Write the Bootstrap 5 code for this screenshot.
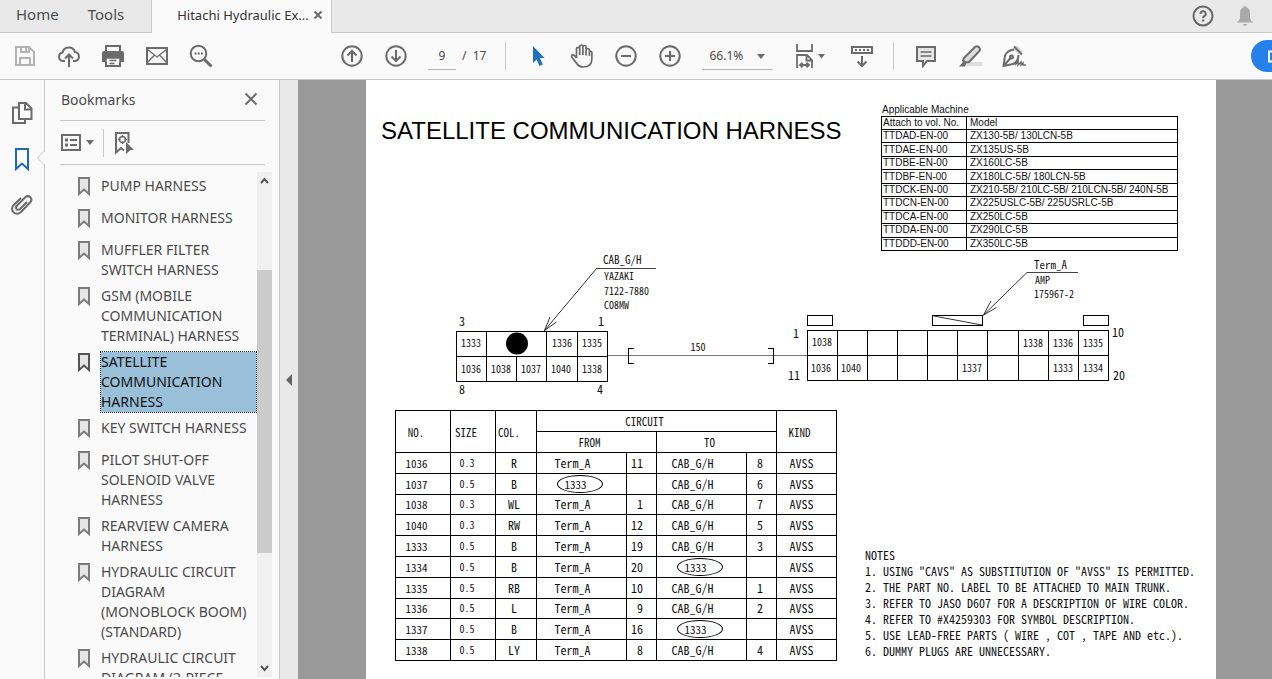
<!DOCTYPE html>
<html lang="en">
<head>
<meta charset="utf-8">
<meta name="viewport" content="width=device-width, initial-scale=1">
<title>Hitachi Hydraulic Excavator</title>
<link rel="stylesheet" href="https://cdn.jsdelivr.net/npm/bootstrap@5.3.0/dist/css/bootstrap.min.css">
<style>
  body { font-family: "Noto Sans", "Open Sans", sans-serif; font-size: 14px; color: #4b4b4b; background: #fafafa; }
  svg { display: block; }
  svg:not([fill]) { fill: none; }
  .tabs-bar { height: 33px; background: #e9e9e9; border-bottom: 1px solid #c8c8c8; }
  .tabs-bar .app-tab { height: 32px; line-height: 29px; font-size: 15px; color: #4b4b4b; text-decoration: none; }
  .tabs-bar .app-tab + .app-tab { margin-left: 29px; }
  .doc-tab { height: 33px; width: 181px; margin-left: 27px; padding-left: 25px; line-height: 30px; font-size: 13px; background: #fafafa; border: solid #c8c8c8; border-width: 0 1px; color: #333; }
  .bell { margin: 0 17px 0 20px; }
  .tool-bar { height: 47px; background: #fafafa; border-bottom: 1px solid #c8c8c8; }
  .file-tools { margin: 0 107px 0 3px; }
  .tool-btn { width: 44px; height: 46px; padding: 0; border: 0; background: none; color: #6b6b6b; flex: none; display: flex; align-items: center; justify-content: center; }
  .tool-btn svg, .ico { stroke: currentColor; stroke-width: 2; }
  .tool-btn .solid { stroke: none; }
  .tool-btn.faded { color: #b3b3b3; }
  .tool-btn.current { color: #2068b5; }
  .vline { width: 1px; height: 28px; background: #c8c8c8; flex: none; }
  .page-box { width: 28px; height: 28px; margin-left: 10px; border: 0; border-bottom: 1px solid #b5b5b5; background: none; text-align: center; font-size: 12px; color: #4b4b4b; padding: 0; }
  .page-total { font-size: 12px; margin: 0 19px 0 6px; }
  .zoom-wrap { margin: 0 15px 0 10px; }
  .zoom-box { width: 71px; height: 28px; border: 0; border-bottom: 1px solid #b5b5b5; appearance: none; font-size: 12px; color: #4b4b4b; padding: 0 7px; background: none; }
  .caret-down { width: 0; height: 0; border: 4px solid transparent; border-top: 5px solid #6b6b6b; border-bottom: 0; }
  .zoom-wrap .caret-down { position: absolute; right: 8px; top: 12px; pointer-events: none; }
  .share-pill { width: 21px; height: 32px; background: #2680eb; border: 0; border-radius: 16px 0 0 16px; padding: 0; overflow: hidden; }
  .work { min-height: 0; }
  .rail { width: 45px; border-right: 1px solid #c8c8c8; padding-top: 10px; flex: none; }
  .rail-notch { right: -1px; top: 69px; }
  .side-panel { width: 235px; border-right: 1px solid #c8c8c8; flex: none; }
  .panel-head { height: 41px; margin: 0 14px 0 15px; padding: 0 7px 2px 1px; border-bottom: 1px solid #c8c8c8; }
  .panel-tools { height: 44px; margin: 0 14px 0 15px; border-bottom: 1px solid #c8c8c8; color: #6b6b6b; }
  .plain { border: 0; background: none; padding: 0; color: #6b6b6b; }
  .marks { margin: 7px 7px 2px 0; min-height: 0; }
  .mark-list { overflow: hidden; padding: 4px 1px 0 32px; }
  .mark-list li { min-height: 26px; margin-bottom: 6px; display: flex; align-items: flex-start; }
  .mark-list svg { margin-right: 10px; flex: none; stroke: #7c7c7c; stroke-width: 2; }
  .mark-list a { color: #4b4b4b; text-decoration: none; line-height: 20px; white-space: nowrap; flex: 1; }
  .mark-list .chosen a { background: #99bfd9; color: #111; outline: 1px dotted #222; }
  .mark-list .chosen svg { stroke: #555; }
  .track { width: 15px; background: #f0f0f0; flex: none; }
  .track-thumb { background: #cbcbcb; flex: 283; }
  .track-above { flex: 78; }
  .track-below { flex: 106; }
  .fold { width: 18px; background: #e9e9e9; flex: none; padding: 0; border: 0; }
  .doc-area { background: #999; padding: 0 56px 0 68px; overflow: hidden; min-width: 0; }
  .sheet { background: #fff; color: #000; min-height: 100%; }
  .sheet-title { font: 24px/30px "Liberation Sans", sans-serif; margin: 36px 0 0 15px; white-space: nowrap; }
  .machines { font: 10px/12px "Liberation Sans", sans-serif; margin: 23px 38px 0 0; }
  .machines caption { caption-side: top; color: #111; padding: 0 0 0 1px; line-height: 13px; }
  .machines table { width: 297px; height: 135px; border-collapse: collapse; color: #111; }
  .machines td, .machines th { border: 1px solid #000; padding: 0 0 0 3px; font-weight: 400; line-height: 12px; white-space: nowrap; }
  .machines td:first-child, .machines th:first-child { padding-left: 1px; width: 85px; }
  .cad { font-family: "Noto Sans CJK JP", "Liberation Mono", monospace; font-feature-settings: "hwid"; }
  .diagram { width: 100%; font-size: 10px; }
  .diagram text { fill: #111; }
  .diagram .part { font-size: 11px; }
  .diagram .pin { text-anchor: middle; }
  .diagram .num { font-size: 12px; text-anchor: middle; }
  .wires { margin-left: 29px; width: 441px; height: 251px; table-layout: fixed; border-collapse: collapse; font-size: 12px; color: #111; flex: none; }
  .wires tr { height: 20px; }
  .wires thead tr { height: 21px; }
  .wires th, .wires td { border: 1px solid #000; padding: 0; text-align: center; font-weight: 400; line-height: 18px; }
  .wires th { font-size: 11px; padding-right: 14px; }
  .wires th.wide-head { padding-right: 24px; }
  .wires td:first-child { padding-right: 13px; font-size: 11px; }
  .wires td:nth-child(2) { padding-right: 12px; font-size: 10px; }
  .wires td:nth-child(3) { padding-right: 4px; }
  .wires td:nth-child(4), .wires td:nth-child(6) { padding-right: 18px; }
  .wires td:nth-child(5), .wires td:nth-child(7) { text-align: right; padding-right: 13px; }
  .wires td:last-child { padding-right: 10px; }
  .ring { display: inline-block; width: 46px; height: 18px; line-height: 16px; border: 1px solid #000; border-radius: 50%; vertical-align: top; padding-right: 8px; margin-left: 14px; font-size: 11px; }
  .notes { font-size: 12px; line-height: 16px; margin: 137px 0 0 28px; white-space: pre; color: #111; }
</style>
</head>
<body class="vh-100 overflow-hidden d-flex flex-column">
<header class="tabs-bar d-flex flex-shrink-0">
  <a href="#" class="app-tab ms-3">Home</a>
  <a href="#" class="app-tab">Tools</a>
  <div class="doc-tab d-flex align-items-start"><span class="text-nowrap">Hitachi Hydraulic Ex...</span>
    <button class="plain ms-1 mt-2" aria-label="Close tab"><svg class="ico" width="10" height="14" viewBox="0 0 10 14"><path d="M1.500 3.500l7 7M8.500 3.500l-7 7"/></svg></button></div>
  <button class="plain ms-auto" aria-label="Help"><svg width="24" height="28" viewBox="0 0 24 28"><circle cx="12" cy="14" r="9.500" stroke="#666" stroke-width="2"/><path d="M9.500 12a2.600 2.600 0 1 1 3.800 2.200q-1.200.6-1.200 2" stroke="#666" stroke-width="2"/><circle cx="12.100" cy="18.600" r="1.200" fill="#666"/></svg></button>
  <button class="plain bell" aria-label="Notifications"><svg width="20" height="28" viewBox="0 0 20 28" fill="#a9a9a9"><path d="M10 4q1.500 0 1.700 1.500Q15 6.500 15 11v4q0 3 3.500 5.500h-17Q5 18 5 15v-4q0-4.500 3.300-5.500Q8.500 4 10 4zM8 22h4q-.4 2-2 2t-2-2z"/></svg></button>
</header>

<nav class="tool-bar d-flex align-items-center flex-shrink-0 overflow-hidden" aria-label="Toolbar">
  <div class="file-tools d-flex">
    <button class="tool-btn faded" aria-label="Save"><svg width="24" height="24" viewBox="0 0 24 24"><path d="M3 3h13l5 5v13H3zM8 3v5h8V3M13 4v3M7 21v-7h10v7" /></svg></button>
    <button class="tool-btn" aria-label="Upload"><svg width="24" height="24" viewBox="0 0 24 24"><path d="M8 17H6a4.300 4.300 0 0 1-.5-8.500A6.500 6.500 0 0 1 18 8a4.600 4.600 0 0 1 .5 9H16M12 23V11M8 14.500l4-4 4 4"/></svg></button>
    <button class="tool-btn" aria-label="Print"><svg width="24" height="24" viewBox="0 0 24 24"><path d="M5 7V2h14v5M5 18v4h14v-4"/><path d="M3 7h18q2 0 2 2v9h-4v-4H5v4H1V9q0-2 2-2z" fill="currentColor" stroke="none"/><path d="M5 22v-8h14v8M8.500 16.500h7M8.500 19.500h5" stroke-width="1.500"/></svg></button>
    <button class="tool-btn" aria-label="Email"><svg width="24" height="24" viewBox="0 0 24 24"><path d="M2 4h20v16H2z"/><path d="M2 5l10 8 10-8M2 19l7.500-8M22 19l-7.500-8" stroke-width="1.300"/></svg></button>
    <button class="tool-btn" aria-label="Search"><svg width="24" height="24" viewBox="0 0 24 24"><circle cx="9.500" cy="9.500" r="7.800"/><path d="M15.500 15.500l7 7" stroke-width="3"/><path d="M5.500 9.500h2M8.700 9.500h2M11.900 9.500h2"/></svg></button>
  </div>
  <button class="tool-btn" aria-label="Previous page"><svg width="24" height="24" viewBox="0 0 24 24"><circle cx="12" cy="12" r="9.700"/><path d="M12 18V7M7.500 11.500L12 7l4.500 4.500"/></svg></button>
  <button class="tool-btn" aria-label="Next page"><svg width="24" height="24" viewBox="0 0 24 24"><circle cx="12" cy="12" r="9.700"/><path d="M12 6v11M7.500 12.500L12 17l4.500-4.500"/></svg></button>
  <input class="page-box" value="9" aria-label="Page number">
  <span class="page-total text-nowrap">/ &nbsp;17</span>
  <span class="vline" style="margin-right:10px"></span>
  <button class="tool-btn" aria-label="Select"><svg class="solid" width="24" height="24" viewBox="0 0 24 24" fill="#1f6fc0"><path d="M7 2l11.500 12h-4.700l3 6.500-3.300 1.500-2.900-6.500L7 19z"/></svg></button>
  <button class="tool-btn" aria-label="Hand"><svg width="26" height="26" viewBox="0 0 26 26"><g stroke-width="1.700"><path d="M7.500 15V6q0-1.700 1.600-1.700T10.700 6v6M10.700 12V3.500Q10.700 2 12.300 2t1.600 1.500V12M13.900 12V4q0-1.500 1.600-1.500T17.100 4v8.500M17.100 7q.2-1.500 1.700-1.500T20.400 7v6M20.400 8.500q2.500-.6 2.500 1.500v5.500q0 8.500-8.400 8.500-5 0-7.500-4.500L3 14.500q-1-1.700.3-2.400 1.200-.6 2.200.5L7.500 15"/></g></svg></button>
  <button class="tool-btn" aria-label="Zoom out"><svg width="24" height="24" viewBox="0 0 24 24"><circle cx="12" cy="12" r="9.700"/><path d="M7 12h10"/></svg></button>
  <button class="tool-btn" aria-label="Zoom in"><svg width="24" height="24" viewBox="0 0 24 24"><circle cx="12" cy="12" r="9.700"/><path d="M7 12h10M12 7v10"/></svg></button>
  <div class="zoom-wrap position-relative"><select class="zoom-box d-block" aria-label="Zoom level"><option>66.1%</option></select><span class="caret-down"></span></div>
  <button class="tool-btn" aria-label="Fit width"><svg width="32" height="26" viewBox="0 0 32 26"><path d="M3 1v7h15V1M3 25V12h10l5 5v8M12.500 12v5.500H18M6.500 22h8M8.500 19.800L6 22l2.500 2.200M12.500 19.800L15 22l-2.500 2.200" stroke-width="1.800"/><path d="M24 11h7l-3.500 4.500z" fill="currentColor" stroke="none"/></svg></button>
  <button class="tool-btn ms-2" aria-label="Page display"><svg width="24" height="24" viewBox="0 0 24 24"><path d="M2 3h20v6H2zM12 12v9M7.500 17.500L12 22l4.500-4.500"/><path d="M5 6h14" stroke-dasharray="2 2"/></svg></button>
  <span class="vline" style="margin:0 10px 0 9px"></span>
  <button class="tool-btn" aria-label="Comment"><svg width="24" height="24" viewBox="0 0 24 24"><path d="M3 3h18v14h-8l-4 5v-5H3z" fill="#e6e6e6"/><path d="M6.500 8h11M6.500 12h11" stroke-width="1.500"/></svg></button>
  <button class="tool-btn" aria-label="Highlight"><svg width="24" height="24" viewBox="0 0 24 24"><path d="M11 18h13v4H8z" fill="#dcdcdc" stroke="none"/><path d="M6 14L17 3q2-1.500 4 .2 1.800 2 .3 4L11 18l-3 .5-3-2z" fill="#dcdcdc"/><path d="M1 22.500l4.500-5 3 2-1.500 3z" fill="currentColor" stroke="none"/></svg></button>
  <button class="tool-btn" aria-label="Sign"><svg width="26" height="24" viewBox="0 0 26 24"><path d="M12 5l4-4 6 6-4 4z" fill="#dcdcdc" stroke="none"/><path d="M13 2.500l8 8M13 5.500q-7 1-9 6L2.500 22l9.500-2q5-2 5.500-9M3 21.500l7-8"/><circle cx="10.500" cy="13" r="1.500"/><path d="M14 21l3-4v4l3-3v3l2-2v2h3" stroke-width="1.500"/></svg></button>
  <button class="share-pill ms-auto" aria-label="Share"><svg width="21" height="32" viewBox="0 0 21 32" stroke="#fff" stroke-width="2"><path d="M24 11.500h-6v10h6"/></svg></button>
</nav>

<main class="work d-flex flex-grow-1">
  <div class="rail position-relative">
    <button class="tool-btn" aria-label="Pages"><svg width="24" height="24" viewBox="0 0 24 24"><path d="M9 2h7l5.500 5.500V18H9zM15 2v6.500h6.500M9 6.500H3V22h12v-4"/></svg></button>
    <button class="tool-btn current" aria-label="Bookmarks"><svg width="24" height="24" viewBox="0 0 24 24"><path d="M6 2h12v20l-6-5.500L6 22z"/></svg></button>
    <button class="tool-btn" aria-label="Attachments"><svg width="24" height="24" viewBox="0 0 24 24"><path d="M17 9l-7 7q-2 1.500-3.500.2-1.300-1.700.3-3.400l8.500-8.500q2.700-2.300 5 0t0 5L11 19q-4 3.500-7.500.3-3-3.700.2-7.300L11 5"/></svg></button>
    <svg class="rail-notch position-absolute" width="9" height="18" viewBox="0 0 9 18"><path d="M8.500 0v2l-7 7 7 7v2" fill="#fafafa" stroke="#c8c8c8"/><path d="M8.500 3v12" stroke="#fafafa"/></svg>
  </div>
  <aside class="side-panel d-flex flex-column">
    <div class="panel-head d-flex align-items-center flex-shrink-0"><span>Bookmarks</span>
      <button class="plain ms-auto" aria-label="Close panel"><svg class="ico" width="14" height="14" viewBox="0 0 14 14"><path d="M1.500 1.500l11 11M12.500 1.500l-11 11"/></svg></button></div>
    <div class="panel-tools d-flex align-items-center flex-shrink-0">
      <button class="plain d-flex align-items-center" aria-label="Options"><svg class="ico" width="22" height="20" viewBox="0 0 22 20"><path d="M2 2h18v15H2z"/><path d="M5 7h3M5 12h3" stroke-width="3"/><path d="M10 7h7M10 12h7"/></svg><span class="caret-down ms-1"></span></button>
      <span class="vline" style="margin:0 10px 0 9px"></span>
      <button class="plain" aria-label="Find current bookmark"><svg class="ico" width="22" height="24" viewBox="0 0 22 24"><path d="M14.500 12V2H2v19.500l5-4.500 3 2.500"/><circle cx="8.500" cy="8.500" r="3" stroke-width="1.300"/><path d="M8.500 4v2.500M8.500 10.500V13M4 8.500h2.500M10.500 8.500H13" stroke-width="1.300"/><path d="M12 11l8 8h-3.500L12 23z" fill="currentColor" stroke="none"/></svg></button>
    </div>
    <div class="marks d-flex flex-grow-1">
      <ul class="mark-list list-unstyled mb-0 flex-grow-1" id="markList"></ul>
      <div class="track d-flex flex-column" aria-hidden="true">
        <svg width="15" height="20" viewBox="0 0 15 20" stroke="#555" stroke-width="2"><path d="M4 11l3.500-4 3.500 4"/></svg>
        <div class="track-above"></div><div class="track-thumb"></div><div class="track-below"></div>
        <svg width="15" height="18" viewBox="0 0 15 18" stroke="#555" stroke-width="2"><path d="M4 7l3.500 4L11 7"/></svg>
      </div>
    </div>
  </aside>
  <button class="fold" aria-label="Collapse panel"><svg width="17" height="12" viewBox="0 0 17 12"><path d="M12 0v12L6 6z" fill="#666"/></svg></button>

  <section class="doc-area flex-grow-1">
    <div class="sheet d-flex flex-column">
      <div class="d-flex justify-content-between">
        <h1 class="sheet-title">SATELLITE COMMUNICATION HARNESS</h1>
        <div class="machines">
          <table><caption>Applicable Machine</caption><thead><tr><th>Attach to vol. No.</th><th>Model</th></tr></thead><tbody>
            <tr><td>TTDAD-EN-00</td><td>ZX130-5B/ 130LCN-5B</td></tr>
            <tr><td>TTDAE-EN-00</td><td>ZX135US-5B</td></tr>
            <tr><td>TTDBE-EN-00</td><td>ZX160LC-5B</td></tr>
            <tr><td>TTDBF-EN-00</td><td>ZX180LC-5B/ 180LCN-5B</td></tr>
            <tr><td>TTDCK-EN-00</td><td>ZX210-5B/ 210LC-5B/ 210LCN-5B/ 240N-5B</td></tr>
            <tr><td>TTDCN-EN-00</td><td>ZX225USLC-5B/ 225USRLC-5B</td></tr>
            <tr><td>TTDCA-EN-00</td><td>ZX250LC-5B</td></tr>
            <tr><td>TTDDA-EN-00</td><td>ZX290LC-5B</td></tr>
            <tr><td>TTDDD-EN-00</td><td>ZX350LC-5B</td></tr>
          </tbody></table></div>
      </div>
      <!-- connector drawing -->
      <svg class="diagram cad" viewBox="366 251 850 159" stroke="#000">
        <g shape-rendering="crispEdges">
          <path d="M456.500 331.500h151v50h-151zM456.500 356.500h151M486.500 331.500v50M516.500 356.500v25M546.500 331.500v50M577.500 331.500v50"/>
          <path d="M807.500 330.500h301v50h-301zM807.500 355.500h301M837.500 330.500v50M867.500 330.500v50M897.500 330.500v50M927.500 330.500v50M957.500 330.500v50M987.500 330.500v50M1018.500 330.500v50M1048.500 330.500v50M1078.500 330.500v50"/>
          <path d="M807.500 315.500h25v10h-25zM932.500 315.500h50v10h-50zM1083.500 315.500h25v10h-25z"/>
          <path d="M608 355.500h199" stroke="#777"/>
          <path d="M634 348.500h-5.500v15h5.500M768 348.500h5.500v15h-5.500"/>
          <path d="M596 268.500h60M1027 272.500h51" stroke="#444"/>
        </g>
        <path d="M596.500 268.500L544.500 330.500M550 317l-5.500 13.500 12-8.500M1027 272.500L983.500 315M991 301l-7.500 14 13-7.500M934 316l48 9" stroke-width=".8"/>
        <circle cx="517" cy="343.500" r="11" fill="#000" stroke="none"/>
        <g stroke="none">
          <text class="part" x="603" y="264">CAB_G/H</text><text x="604" y="280">YAZAKI</text><text x="604" y="295">7122-7880</text><text x="604" y="309">CO8MW</text>
          <text class="part" x="1034" y="269">Term_A</text><text x="1035" y="284">AMP</text><text x="1034" y="298">175967-2</text>
          <g class="num"><text x="462" y="326">3</text><text x="601" y="326">1</text><text x="462" y="394">8</text><text x="600" y="394">4</text><text x="796" y="338">1</text><text x="794" y="380">11</text><text x="1118" y="337">10</text><text x="1119" y="380">20</text></g>
          <g class="pin"><text x="471" y="347">1333</text><text x="562" y="347">1336</text><text x="592" y="347">1335</text><text x="471" y="373">1036</text><text x="501" y="373">1038</text><text x="531" y="373">1037</text><text x="561" y="373">1040</text><text x="592" y="373">1338</text><text x="698" y="351">150</text>
          <text x="822" y="346">1038</text><text x="1033" y="347">1338</text><text x="1063" y="347">1336</text><text x="1093" y="347">1335</text><text x="821" y="372">1036</text><text x="851" y="372">1040</text><text x="972" y="372">1337</text><text x="1063" y="372">1333</text><text x="1093" y="372">1334</text></g>
        </g>
      </svg>
      <div class="d-flex cad">
        <table class="wires">
          <colgroup><col style="width:55px"><col style="width:45px"><col style="width:41px"><col style="width:90px"><col style="width:30px"><col style="width:90px"><col style="width:30px"><col style="width:60px"></colgroup>
          <thead><tr><th rowspan="2">NO.</th><th rowspan="2">SIZE</th><th rowspan="2">COL.</th><th colspan="4" class="wide-head">CIRCUIT</th><th rowspan="2">KIND</th></tr><tr><th colspan="2">FROM</th><th colspan="2">TO</th></tr></thead>
          <tbody id="wireRows"></tbody>
        </table>
        <div class="notes">NOTES
1. USING "CAVS" AS SUBSTITUTION OF "AVSS" IS PERMITTED.
2. THE PART NO. LABEL TO BE ATTACHED TO MAIN TRUNK.
3. REFER TO JASO D607 FOR A DESCRIPTION OF WIRE COLOR.
4. REFER TO #X4259303 FOR SYMBOL DESCRIPTION.
5. USE LEAD-FREE PARTS ( WIRE , COT , TAPE AND etc.).
6. DUMMY PLUGS ARE UNNECESSARY.</div>
      </div>
    </div>
  </section>
</main>
<script src="https://cdn.jsdelivr.net/npm/bootstrap@5.3.0/dist/js/bootstrap.bundle.min.js"></script>
<script>
  const marks = ["PUMP HARNESS", "MONITOR HARNESS", "MUFFLER FILTER|SWITCH HARNESS", "GSM (MOBILE|COMMUNICATION|TERMINAL) HARNESS", "SATELLITE|COMMUNICATION|HARNESS", "KEY SWITCH HARNESS", "PILOT SHUT-OFF|SOLENOID VALVE|HARNESS", "REARVIEW CAMERA|HARNESS", "HYDRAULIC CIRCUIT|DIAGRAM|(MONOBLOCK BOOM)|(STANDARD)", "HYDRAULIC CIRCUIT|DIAGRAM (2-PIECE"];
  document.getElementById("markList").innerHTML = marks.map((m, i) =>
    `<li${i === 4 ? ' class="chosen"' : ""}><svg width="14" height="20" viewBox="0 0 14 20" fill="#e6e6e6"><path d="M2 2h10v16l-5-4.500L2 18z"/></svg><a href="#">${m.split("|").join("<br>")}</a></li>`).join("");

  const wires = ["1036 0.3 R Term_A 11 CAB_G/H 8", "1037 0.5 B *1333 - CAB_G/H 6", "1038 0.3 WL Term_A 1 CAB_G/H 7", "1040 0.3 RW Term_A 12 CAB_G/H 5", "1333 0.5 B Term_A 19 CAB_G/H 3", "1334 0.5 B Term_A 20 *1333 -", "1335 0.5 RB Term_A 10 CAB_G/H 1", "1336 0.5 L Term_A 9 CAB_G/H 2", "1337 0.5 B Term_A 16 *1333 -", "1338 0.5 LY Term_A 8 CAB_G/H 4"];
  document.getElementById("wireRows").innerHTML = wires.map(w => "<tr>" + (w + " AVSS").split(" ").map(c =>
    `<td>${c === "-" ? "" : c[0] === "*" ? `<span class="ring">${c.slice(1)}</span>` : c}</td>`).join("") + "</tr>").join("");
</script>
</body>
</html>
